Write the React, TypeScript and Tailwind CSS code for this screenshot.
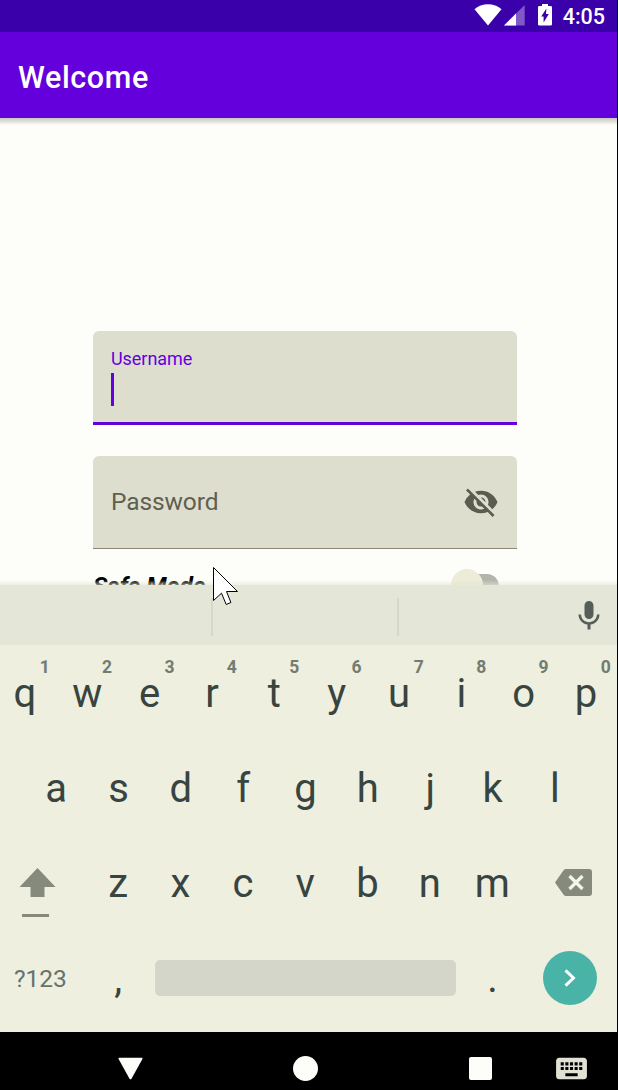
import React from "react";
import { MdKeyboard, MdMic, MdVisibilityOff } from "react-icons/md";

const topRow = ["q", "w", "e", "r", "t", "y", "u", "i", "o", "p"];
const homeRow = ["a", "s", "d", "f", "g", "h", "j", "k", "l"];
const bottomRow = ["z", "x", "c", "v", "b", "n", "m"];

function Key({ label, hint }: { label: string; hint?: string }) {
  return (
    <div className="relative w-[62.35px] shrink-0 text-center text-[40px] leading-[98px] text-[#37443f]">
      {label}
      {hint && (
        <span className="absolute top-[10px] left-[41px] w-5 text-center text-[17.5px] leading-6 font-bold text-[#737c70]">
          {hint}
        </span>
      )}
    </div>
  );
}

function StatusBar() {
  return (
    <div className="flex h-8 shrink-0 items-start justify-end bg-[#3a00aa] pr-[12px] text-white">
      <svg className="mt-1 h-[22px] w-[28px]" viewBox="0 0 28 22" fill="currentColor">
        <path d="M14 21.500 0.500 5.200C4.200 2 9 .2 14 .2s9.800 1.800 13.500 5z" />
      </svg>
      <svg className="mt-[5px] ml-[2px] h-[21px] w-[21px]" viewBox="0 0 21 21" fill="currentColor">
        <path d="M0 20.500 20.700 0v20.500z" opacity=".35" />
        <path d="M0 20.500 12 8.600v11.900z" />
      </svg>
      <svg className="mt-1 ml-[13px] h-[22px] w-[14px]" viewBox="0 0 14 22">
        <path d="M4 0h6v2h2.600Q14 2 14 3.400v16.800q0 1.400-1.400 1.400H1.400Q0 21.600 0 20.200V3.400Q0 2 1.400 2H4z" fill="#fff" />
        <path d="M8.400 4.500 8 10h2.800L5.600 18.500v-6H3.200z" fill="#3a00aa" />
      </svg>
      <span className="ml-[11px] text-[21.5px] leading-[33px] font-medium">4:05</span>
    </div>
  );
}

function LoginForm() {
  return (
    <div className="flex h-[467px] shrink-0 flex-col overflow-hidden bg-[#fdfdfa]">
      <div className="h-[7px] shrink-0 bg-linear-to-b from-[#c6c6bc] to-[#fdfdfa]" />
      <div className="mt-[206px] ml-[93px] w-[424px] shrink-0">
        <div className="h-[94px] rounded-t-[6px] border-b-3 border-[#6400dc] bg-[#dedecf] pt-[17px] pl-[18px]">
          <div className="text-[18px] leading-[22px] tracking-[-0.05px] text-[#6400dc]">Username</div>
          <div className="mt-[3px] h-[33px] w-[3px] bg-[#6400dc]" />
        </div>
        <div className="mt-[31px] flex h-[93px] items-center justify-between rounded-t-[6px] border-b-[1.5px] border-[#8a8a72] bg-[#dedecf] pr-[18px] pl-[18px]">
          <span className="pt-px text-[24.5px] tracking-[-0.1px] text-[#5f5f52]">Password</span>
          <MdVisibilityOff className="size-9 text-[#5b5b50]" />
        </div>
        <div className="mt-[20px] flex h-8 items-start justify-between pr-[18px]">
          <span className="pt-px text-[24px] leading-8 font-bold text-black italic">Safe Mode</span>
          <div className="mt-[5px] h-[24px] w-[42px] rounded-full bg-[#b4b4ae]">
            <div className="-mt-[5px] -ml-[6px] inline-block size-[32px] rounded-full bg-[#ececd8] align-top" />
          </div>
        </div>
      </div>
    </div>
  );
}

function Keyboard() {
  return (
    <div className="relative flex h-[447px] shrink-0 flex-col bg-[#eeefdf]">
      <div className="absolute -top-[5px] left-0 h-[5px] w-full bg-linear-to-b from-transparent to-[#e4e7d0]/60" />
      <div className="flex h-[60px] shrink-0 items-start bg-[#e4e7d8] pt-[13px]">
        <div className="ml-[211px] h-[38px] w-[2px] bg-[#d6d8c9]" />
        <div className="ml-[184px] h-[38px] w-[2px] bg-[#d6d8c9]" />
        <MdMic className="ml-[172px] size-9 text-[#555e58]" />
      </div>
      <div className="flex h-[95px] w-[611px] justify-center">
        {topRow.map((k, i) => (
          <Key key={k} label={k} hint={String((i + 1) % 10)} />
        ))}
      </div>
      <div className="flex h-[95px] w-[611px] justify-center">
        {homeRow.map((k) => (
          <Key key={k} label={k} />
        ))}
      </div>
      <div className="flex h-[95px] w-[617px]">
        <div className="flex w-[87px] flex-col pt-[33px] pl-[19px]">
          <svg className="h-[29px] w-[37px]" viewBox="0 0 37 29" fill="#868a7c">
            <path d="M18.500 0 36.500 19H25.500v10h-14V19H.5z" />
          </svg>
          <div className="mt-[17px] ml-[3px] h-[3px] w-[27px] bg-[#868a7c]" />
        </div>
        {bottomRow.map((k) => (
          <Key key={k} label={k} />
        ))}
        <svg className="mt-[34px] ml-[32px] h-[27px] w-[37px]" viewBox="0 0 37 27">
          <path d="M11 0h23q3 0 3 3v21q0 3-3 3H11q-1.500 0-2.400-1.300L0 13.500 8.600 1.300Q9.500 0 11 0z" fill="#868a7c" />
          <path d="m14.500 7 13 13m0-13-13 13" stroke="#f4f5e8" strokeWidth="3.300" />
        </svg>
      </div>
      <div className="flex h-[97px] items-start">
        <div className="w-[87px] pl-[14px] text-[24.5px] leading-[97px] text-[#68726c]">?123</div>
        <Key label="," />
        <div className="mt-[30px] ml-[6px] h-[36px] w-[301px] rounded-[5px] bg-[#d4d6c9]" />
        <div className="ml-[5px] flex">
          <Key label="." />
        </div>
        <div className="mt-[21px] ml-[19px] flex size-[54px] shrink-0 items-center justify-center rounded-full bg-[#48b3a6]">
          <svg className="h-[18px] w-[12px]" viewBox="0 0 12 18" fill="none" stroke="#fff" strokeWidth="3">
            <path d="m1.500 1.300 8 7.700-8 7.700" />
          </svg>
        </div>
      </div>
    </div>
  );
}

function NavigationBar() {
  return (
    <div className="flex h-[58px] shrink-0 items-start bg-black pt-[25px] text-[#fdfdfa]">
      <svg className="ml-[117.5px] h-[23px] w-[25px]" viewBox="0 0 25 23" fill="currentColor">
        <path d="M1.300.8h22.400q1.300 0 .7 1.300L13.500 21.700q-1 1.300-2 0L.6 2.100Q0 .8 1.300.8z" />
      </svg>
      <div className="-mt-px ml-[150.5px] size-[25px] rounded-full bg-[#fdfdfa]" />
      <div className="ml-[151px] size-[23px] rounded-[2px] bg-[#fdfdfa]" />
      <MdKeyboard className="-mt-[7px] ml-[61px] size-[37px] text-[#e2e2d4]" />
    </div>
  );
}

export default function App() {
  return (
    <div className="relative h-[1090px] w-[618px] overflow-hidden border-r border-black bg-black font-['Roboto',sans-serif]">
      <div className="flex h-full flex-col">
        <StatusBar />
        <header className="flex h-[86px] shrink-0 items-center bg-[#6400dc] pt-[5px] pl-[18px] text-[30.5px] font-medium tracking-[0.6px] text-white">
          Welcome
        </header>
        <LoginForm />
        <Keyboard />
        <NavigationBar />
      </div>
      <svg className="absolute top-[566px] left-[212px] h-[42px] w-[28px]" viewBox="0 0 28 42">
        <path
          d="M1.500 1.500v33l8-7.300 4.700 11.300 4.700-2-4.400-11H25.500z"
          fill="#fff"
          stroke="#000"
          strokeWidth="1"
        />
      </svg>
    </div>
  );
}
